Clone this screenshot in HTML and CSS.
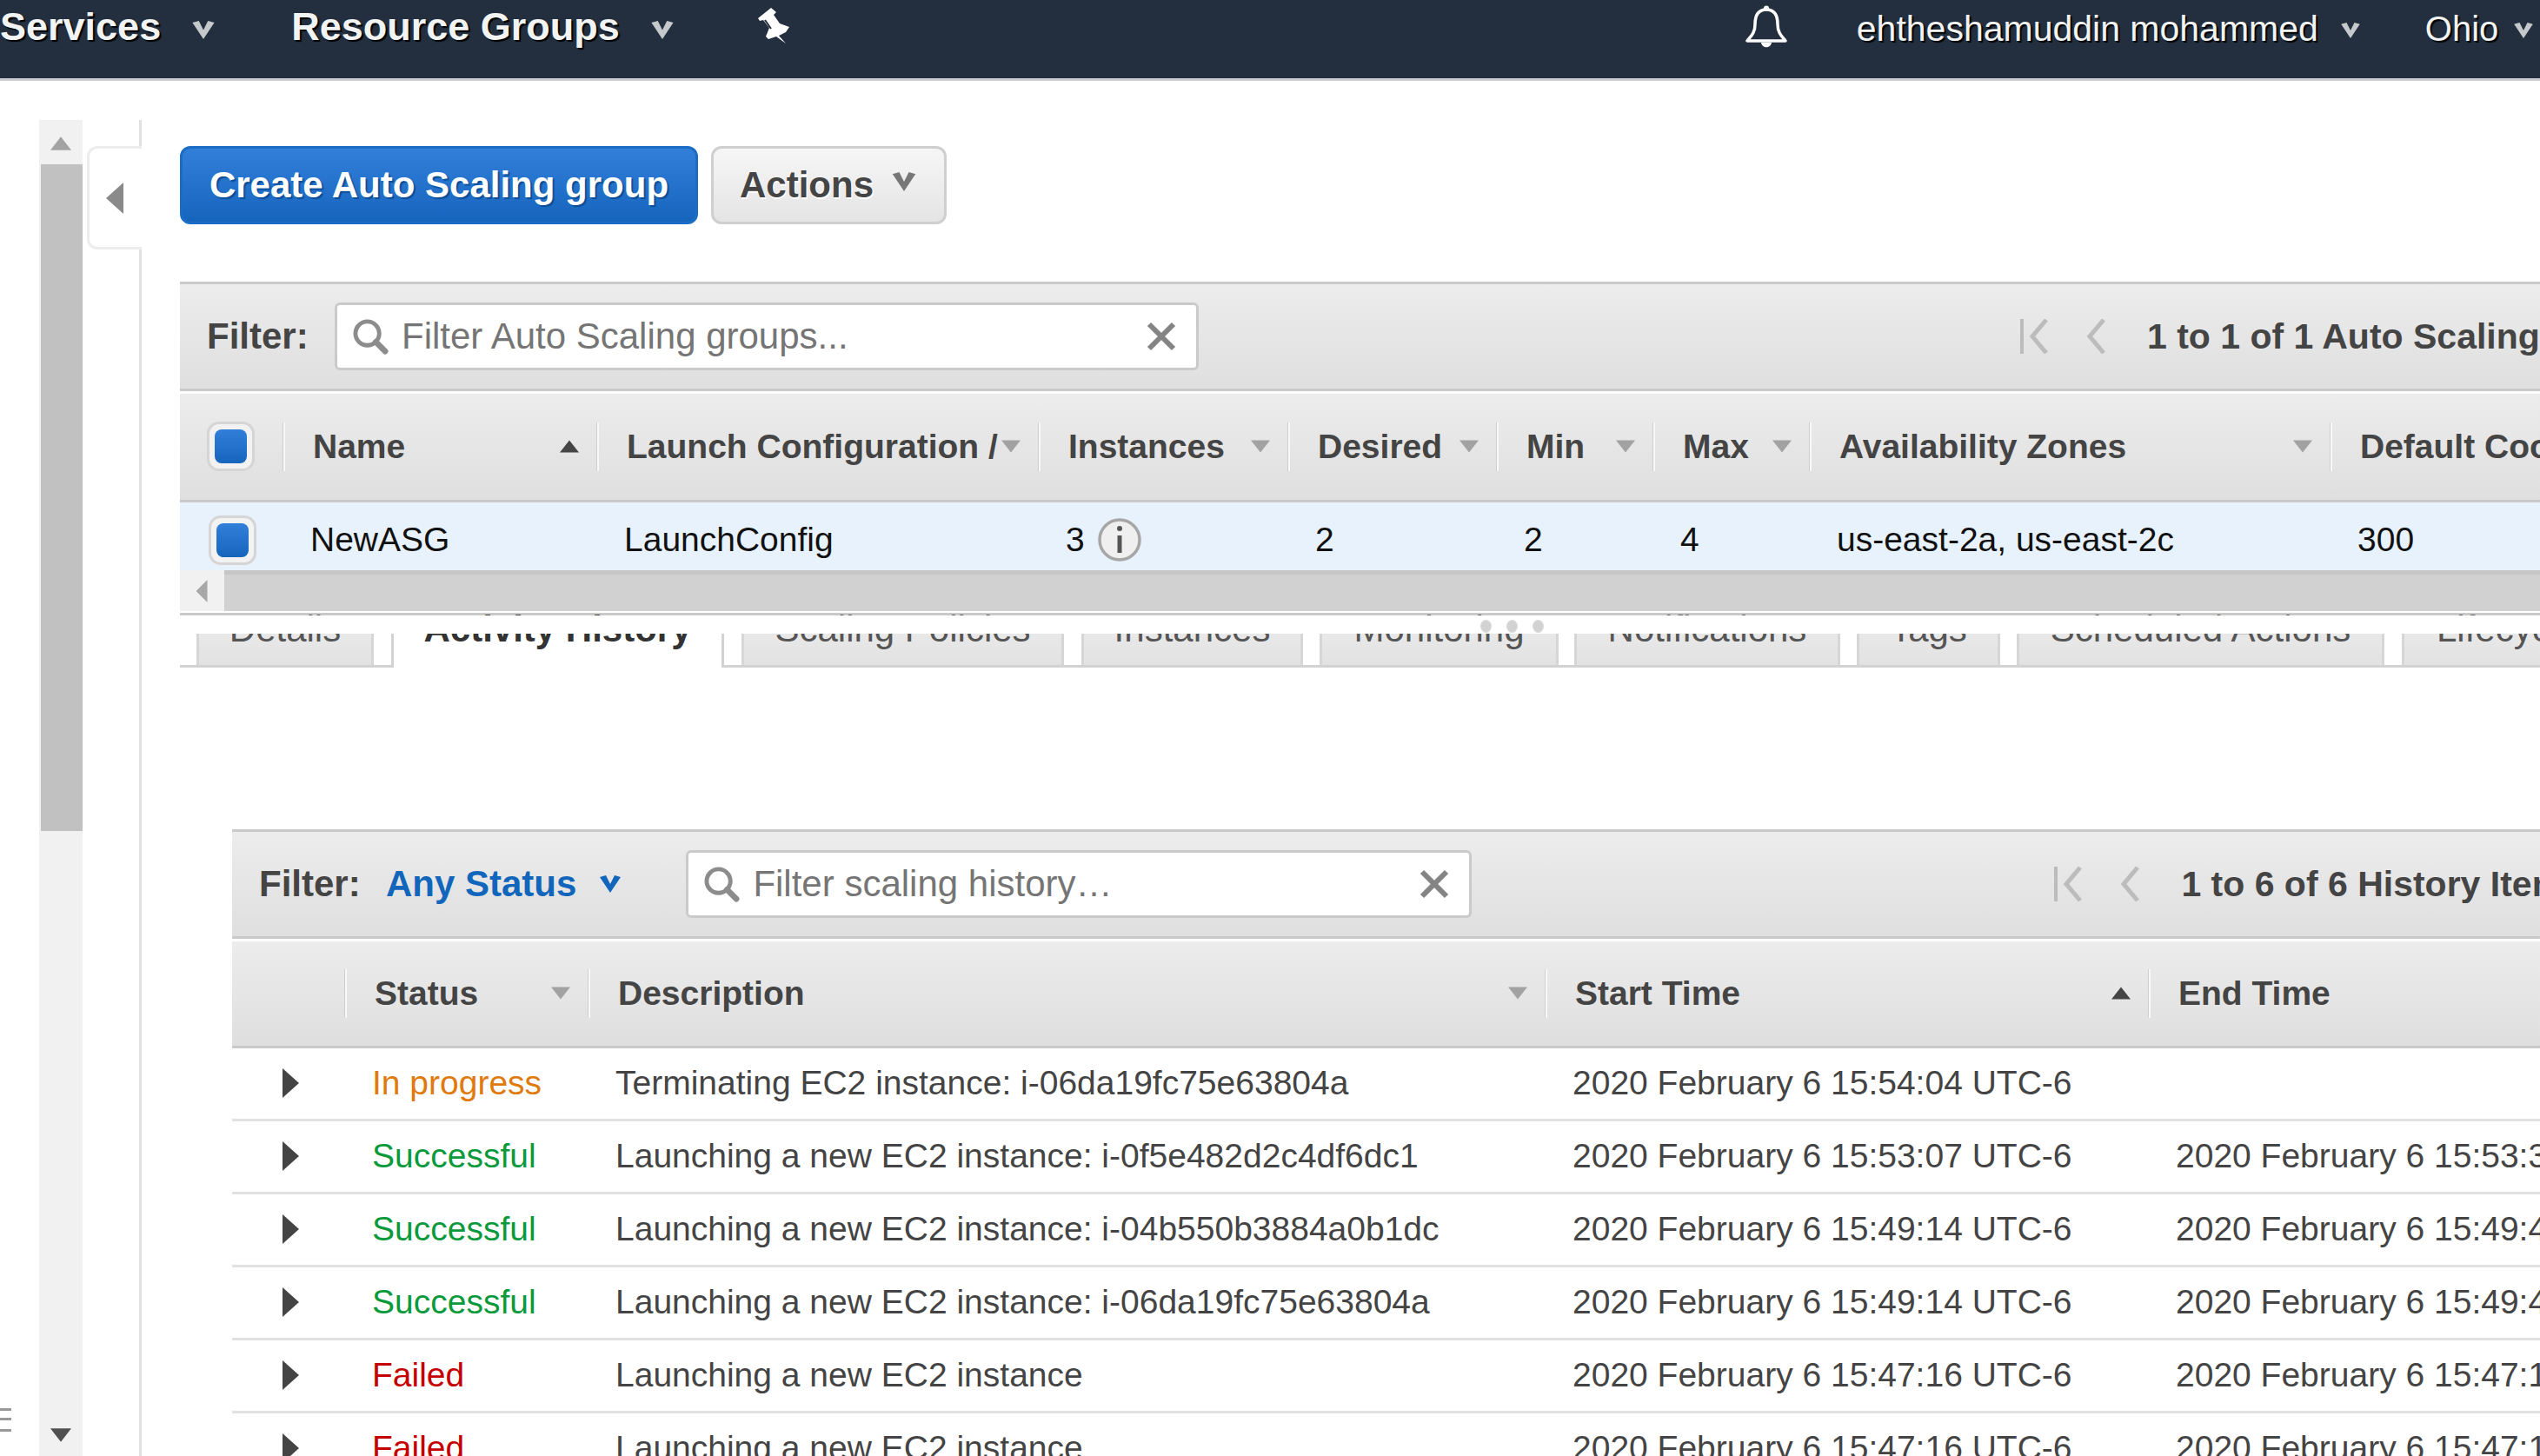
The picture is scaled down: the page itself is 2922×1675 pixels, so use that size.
FILE: index.html
```html
<!DOCTYPE html>
<html lang="en">
<head>
  <meta charset="UTF-8">
  <title>Auto Scaling Groups</title>
  <link rel="stylesheet" href="styles.css">
</head>
<body>
  <svg class="defs" width="0" height="0">
    <symbol id="chev" viewBox="0 0 24 20"><path d="M0 2 7 0 12 10 17 0 24 2 12 20Z"/></symbol>
    <symbol id="down" viewBox="0 0 22 14"><path d="M0 0H22L11 14Z"/></symbol>
    <symbol id="up" viewBox="0 0 22 14"><path d="M0 14H22L11 0Z"/></symbol>
    <symbol id="search" viewBox="0 0 42 42"><circle cx="17" cy="17" r="14" fill="none" stroke="#8c8c8c" stroke-width="5"/><path d="M27 27 38 38" stroke="#8c8c8c" stroke-width="7" stroke-linecap="round"/></symbol>
    <symbol id="close" viewBox="0 0 34 34"><path d="M3 3 31 31M31 3 3 31" stroke="#848484" stroke-width="6"/></symbol>
    <symbol id="first" viewBox="0 0 32 40"><path d="M2 0V40" stroke="#bcbcbc" stroke-width="4"/><path d="M30 1 14 20 30 39" fill="none" stroke="#bcbcbc" stroke-width="5"/></symbol>
    <symbol id="prev" viewBox="0 0 22 40"><path d="M20 1 4 20 20 39" fill="none" stroke="#bcbcbc" stroke-width="5"/></symbol>
    <symbol id="row-arrow" viewBox="0 0 19 34"><path d="M0 0 19 17 0 34Z"/></symbol>
  </svg>

  <header class="topnav">
    <span class="nav-item nav-bold nav-services">Services</span>
    <svg class="nav-chev"><use href="#chev"/></svg>
    <span class="nav-item nav-bold nav-groups">Resource Groups</span>
    <svg class="nav-chev"><use href="#chev"/></svg>
    <svg class="nav-pin" viewBox="0 0 40 44"><path d="M1 13 16 1 22 6 19 9 26 19 37 23 33 29 25 33 33 42 22 34 13 37 10 34 14 24 7 15 3 16Z" fill="#fff"/><path d="M9 15 16 25" stroke="#232f3e" stroke-width="2"/></svg>
    <svg class="nav-bell" viewBox="0 0 50 50"><path d="M25 5C15 5 12 12 12 22 12 32 7 36 3 41H47C43 36 38 32 38 22 38 12 35 5 25 5Z" fill="none" stroke="#fff" stroke-width="3.5" stroke-linejoin="round"/><circle cx="25" cy="3.5" r="3" fill="#fff"/><path d="M19 43C20 50 30 50 31 43Z" fill="#fff"/></svg>
    <span class="nav-item nav-user">ehtheshamuddin mohammed</span>
    <svg class="nav-caret"><use href="#chev"/></svg>
    <span class="nav-item nav-region">Ohio</span>
    <svg class="nav-caret"><use href="#chev"/></svg>
  </header>

  <div class="workspace">
    <span class="handle-lines"></span>
    <div class="page-scroll">
      <svg class="page-arrow"><use href="#up"/></svg>
      <div class="page-thumb"></div>
      <svg class="page-arrow page-arrow-down"><use href="#down"/></svg>
    </div>
    <div class="side-rule">
      <div class="collapse-tab"><svg viewBox="0 0 20 36"><path d="M20 0V36L0 18Z"/></svg></div>
    </div>

    <main class="content">
      <div class="actions">
        <button class="btn btn-primary">Create Auto Scaling group</button>
        <button class="btn btn-default">Actions <svg class="btn-chev"><use href="#chev"/></svg></button>
      </div>

      <section class="groups">
        <div class="filter-bar">
          <span class="filter-label">Filter:</span>
          <div class="search search-groups">
            <svg class="search-icon"><use href="#search"/></svg>
            <span class="placeholder">Filter Auto Scaling groups...</span>
            <svg class="search-clear"><use href="#close"/></svg>
          </div>
          <div class="pager pager-groups">
            <svg class="pager-first"><use href="#first"/></svg>
            <svg class="pager-prev"><use href="#prev"/></svg>
            <span class="pager-text">1 to 1 of 1 Auto Scaling Groups</span>
          </div>
        </div>

        <table class="grid">
          <colgroup>
            <col class="g1"><col class="g2"><col class="g3"><col class="g4"><col class="g5"><col class="g6"><col class="g7"><col class="g8"><col class="g9">
          </colgroup>
          <thead>
            <tr>
              <th class="no-rule"><span class="check check-head"></span></th>
              <th><div class="th-in">Name<svg class="sort sort-dark"><use href="#up"/></svg></div></th>
              <th><div class="th-in">Launch Configuration /<svg class="sort"><use href="#down"/></svg></div></th>
              <th><div class="th-in">Instances<svg class="sort"><use href="#down"/></svg></div></th>
              <th><div class="th-in">Desired<svg class="sort"><use href="#down"/></svg></div></th>
              <th><div class="th-in">Min<svg class="sort"><use href="#down"/></svg></div></th>
              <th><div class="th-in">Max<svg class="sort"><use href="#down"/></svg></div></th>
              <th><div class="th-in">Availability Zones<svg class="sort"><use href="#down"/></svg></div></th>
              <th><div class="th-in">Default Cooldown</div></th>
            </tr>
          </thead>
          <tbody>
            <tr class="selected">
              <td class="cell-check"><span class="check"></span></td>
              <td>NewASG</td>
              <td>LaunchConfig</td>
              <td><div class="count">3<svg class="info" viewBox="0 0 50 50"><circle cx="25" cy="25" r="23" fill="#efefef" stroke="#a6a6a6" stroke-width="3.5"/><path d="M25 20V40" stroke="#555" stroke-width="5"/><circle cx="25" cy="12" r="3" fill="#555"/></svg></div></td>
              <td>2</td>
              <td>2</td>
              <td>4</td>
              <td>us-east-2a, us-east-2c</td>
              <td>300</td>
            </tr>
          </tbody>
        </table>

        <div class="hscroll">
          <div class="hscroll-btn"><svg viewBox="0 0 14 28"><path d="M14 0V28L0 14Z"/></svg></div>
          <div class="hscroll-thumb"></div>
        </div>
      </section>

      <div class="tabs-wrap">
        <nav class="tabs">
          <span class="tab t-details">Details</span>
          <span class="tab tab-active t-activity">Activity History</span>
          <span class="tab t-scaling">Scaling Policies</span>
          <span class="tab t-instances">Instances</span>
          <span class="tab t-monitoring">Monitoring</span>
          <span class="tab t-notifications">Notifications</span>
          <span class="tab t-tags">Tags</span>
          <span class="tab t-scheduled">Scheduled Actions</span>
          <span class="tab t-lifecycle">Lifecycle Hooks</span>
        </nav>
        <div class="tabs-cover"></div>
        <div class="drag-dots"><i></i><i></i><i></i></div>
      </div>

      <section class="history">
        <div class="filter-bar">
          <span class="filter-label">Filter:</span>
          <span class="status-filter">Any Status</span>
          <svg class="status-chev"><use href="#chev"/></svg>
          <div class="search search-history">
            <svg class="search-icon"><use href="#search"/></svg>
            <span class="placeholder">Filter scaling history…</span>
            <svg class="search-clear"><use href="#close"/></svg>
          </div>
          <div class="pager pager-history">
            <svg class="pager-first"><use href="#first"/></svg>
            <svg class="pager-prev"><use href="#prev"/></svg>
            <span class="pager-text">1 to 6 of 6 History Items</span>
          </div>
        </div>

        <table class="grid grid-history">
          <colgroup>
            <col class="h1"><col class="h2"><col class="h3"><col class="h4"><col class="h5">
          </colgroup>
          <thead>
            <tr>
              <th class="no-rule"></th>
              <th><div class="th-in">Status<svg class="sort"><use href="#down"/></svg></div></th>
              <th><div class="th-in">Description<svg class="sort"><use href="#down"/></svg></div></th>
              <th><div class="th-in">Start Time<svg class="sort sort-dark"><use href="#up"/></svg></div></th>
              <th><div class="th-in">End Time</div></th>
            </tr>
          </thead>
          <tbody>
            <tr>
              <td class="cell-arrow"><svg class="row-arrow"><use href="#row-arrow"/></svg></td>
              <td class="st-progress">In progress</td>
              <td>Terminating EC2 instance: i-06da19fc75e63804a</td>
              <td>2020 February 6 15:54:04 UTC-6</td>
              <td></td>
            </tr>
            <tr>
              <td class="cell-arrow"><svg class="row-arrow"><use href="#row-arrow"/></svg></td>
              <td class="st-ok">Successful</td>
              <td>Launching a new EC2 instance: i-0f5e482d2c4df6dc1</td>
              <td>2020 February 6 15:53:07 UTC-6</td>
              <td>2020 February 6 15:53:39 UTC-6</td>
            </tr>
            <tr>
              <td class="cell-arrow"><svg class="row-arrow"><use href="#row-arrow"/></svg></td>
              <td class="st-ok">Successful</td>
              <td>Launching a new EC2 instance: i-04b550b3884a0b1dc</td>
              <td>2020 February 6 15:49:14 UTC-6</td>
              <td>2020 February 6 15:49:46 UTC-6</td>
            </tr>
            <tr>
              <td class="cell-arrow"><svg class="row-arrow"><use href="#row-arrow"/></svg></td>
              <td class="st-ok">Successful</td>
              <td>Launching a new EC2 instance: i-06da19fc75e63804a</td>
              <td>2020 February 6 15:49:14 UTC-6</td>
              <td>2020 February 6 15:49:46 UTC-6</td>
            </tr>
            <tr>
              <td class="cell-arrow"><svg class="row-arrow"><use href="#row-arrow"/></svg></td>
              <td class="st-fail">Failed</td>
              <td>Launching a new EC2 instance</td>
              <td>2020 February 6 15:47:16 UTC-6</td>
              <td>2020 February 6 15:47:16 UTC-6</td>
            </tr>
            <tr>
              <td class="cell-arrow"><svg class="row-arrow"><use href="#row-arrow"/></svg></td>
              <td class="st-fail">Failed</td>
              <td>Launching a new EC2 instance</td>
              <td>2020 February 6 15:47:16 UTC-6</td>
              <td>2020 February 6 15:47:16 UTC-6</td>
            </tr>
          </tbody>
        </table>
      </section>
    </main>
  </div>
</body>
</html>
```

FILE: styles.css
```css
html, body {
  margin: 0;
  padding: 0;
  height: 100%;
  overflow: hidden;
}
body {
  width: 2922px;
  height: 1675px;
  background: #fff;
  color: #444;
  font-family: "Liberation Sans", Arial, sans-serif;
  font-size: 39px;
}
.defs {
  position: absolute;
}

/* top bar */
.topnav {
  display: flex;
  height: 90px;
  border-bottom: 3px solid #c9cdd2;
  background: #232f3e;
  color: #f2f3f3;
  align-items: flex-start;
  white-space: nowrap;
}
.nav-item {
  line-height: 60px;
  text-shadow: 2px 2px 1px #000;
}
.nav-bold {
  font-size: 45px;
  font-weight: bold;
  line-height: 62px;
}
.nav-chev {
  width: 28px;
  height: 21px;
  margin-top: 24px;
  margin-left: 35px;
  fill: #c6c9cc;
}
.nav-groups {
  margin-left: 87px;
}
.nav-pin {
  width: 40px;
  height: 44px;
  margin-left: 95px;
  margin-top: 8px;
}
.nav-bell {
  width: 50px;
  height: 52px;
  margin-left: 1096px;
  margin-top: 5px;
}
.nav-user {
  margin-left: 79px;
  font-size: 41px;
  line-height: 66px;
}
.nav-caret {
  width: 22px;
  height: 18px;
  margin-top: 26px;
  margin-left: 26px;
  fill: #c6c9cc;
}
.nav-region {
  margin-left: 75px;
  font-size: 40px;
  line-height: 66px;
}
.nav-region + .nav-caret {
  margin-left: 18px;
}

/* left gutter */
.workspace {
  display: flex;
  height: 1582px;
  position: relative;
}
.handle-lines {
  position: absolute;
  left: 0;
  top: 1527px;
  width: 13px;
  height: 27px;
  box-sizing: border-box;
  border-top: 3px solid #999;
  border-bottom: 3px solid #999;
}
.handle-lines::after {
  content: "";
  display: block;
  margin-top: 8px;
  height: 3px;
  background: #999;
}
.page-scroll {
  display: flex;
  flex-direction: column;
  width: 50px;
  margin: 45px 0 0 45px;
  background: #f1f1f1;
  align-items: flex-end;
}
.page-arrow {
  width: 24px;
  height: 16px;
  margin: 19px 13px 16px;
  fill: #a3a3a3;
  flex: none;
}
.page-arrow-down {
  margin: 0 13px 0;
  position: absolute;
  top: 1550px;
  fill: #505050;
}
.page-thumb {
  width: 48px;
  height: 767px;
  background: #c1c1c1;
}
.side-rule {
  position: relative;
  width: 65px;
  margin-top: 45px;
  border-right: 3px solid #e1e1e1;
}
.collapse-tab {
  position: absolute;
  left: 5px;
  top: 30px;
  width: 63px;
  height: 119px;
  box-sizing: border-box;
  border: 3px solid #ededed;
  border-right: none;
  border-radius: 12px 0 0 12px;
  background: #fff;
  display: flex;
  align-items: center;
  padding-left: 19px;
}
.collapse-tab svg {
  width: 20px;
  height: 36px;
  fill: #8a8a8a;
}

/* content */
.content {
  margin-left: 44px;
  width: 2715px;
  white-space: nowrap;
}
.actions {
  display: flex;
  gap: 15px;
  padding-top: 75px;
  margin-bottom: 66px;
}
.btn {
  height: 90px;
  box-sizing: border-box;
  border-radius: 12px;
  font-family: inherit;
  font-size: 42px;
  font-weight: bold;
  padding: 0;
}
.btn-primary {
  width: 596px;
  border: 3px solid #1a6cc4;
  background: linear-gradient(#327fd9, #1665bd);
  color: #fff;
  text-shadow: 2px 2px 1px #0b4d96;
}
.btn-default {
  width: 271px;
  border: 3px solid #cfcfcf;
  background: linear-gradient(#f6f6f6, #e4e4e4);
  color: #444;
  text-align: left;
  padding-left: 30px;
  text-shadow: 1px 2px 0 #fff;
}
.btn-chev {
  width: 30px;
  height: 22px;
  margin-left: 8px;
  vertical-align: 7px;
  fill: #777;
}

.filter-bar {
  display: flex;
  align-items: center;
  height: 126px;
  box-sizing: border-box;
  border-top: 3px solid #c9c9c9;
  border-bottom: 3px solid #c9c9c9;
  background: linear-gradient(#ececec, #dfdfdf);
  padding-left: 31px;
  font-size: 42px;
}
.filter-label {
  font-weight: bold;
  width: 147px;
  flex: none;
}
.search {
  display: flex;
  align-items: center;
  box-sizing: border-box;
  height: 78px;
  border: 3px solid #cacaca;
  border-radius: 6px;
  background: #fff;
  color: #757575;
  flex: none;
}
.search-groups {
  width: 994px;
}
.search-history {
  width: 904px;
  margin-left: 73px;
}
.search-icon {
  width: 41px;
  height: 41px;
  margin-left: 18px;
  flex: none;
}
.placeholder {
  margin-left: 15px;
  flex: 1;
}
.search-clear {
  width: 34px;
  height: 34px;
  margin-right: 23px;
  flex: none;
}
.pager {
  display: flex;
  align-items: center;
}
.pager-groups {
  margin-left: 945px;
}
.pager-history {
  margin-left: 670px;
}
.pager-first {
  width: 32px;
  height: 40px;
}
.pager-prev {
  width: 22px;
  height: 40px;
  margin-left: 44px;
}
.pager-text {
  margin-left: 48px;
  font-size: 41px;
  font-weight: bold;
}

/* tables */
.grid {
  margin-top: 3px;
  border-collapse: collapse;
  table-layout: fixed;
  width: 2900px;
}
.grid th {
  height: 123px;
  box-sizing: border-box;
  padding: 0;
  border-bottom: 3px solid #c9c9c9;
  background: linear-gradient(#ececec, #dfdfdf);
  font-weight: bold;
  text-align: left;
}
.th-in {
  display: flex;
  align-items: center;
  height: 56px;
  box-sizing: border-box;
  border-left: 2px solid #f8f8f8;
  box-shadow: -1px 0 0 #cfcfcf;
  padding-left: 32px;
}
.sort {
  width: 22px;
  height: 15px;
  margin-left: auto;
  margin-right: 21px;
  fill: #a2a2a2;
  flex: none;
}
.sort-dark {
  fill: #444;
}
.grid td {
  height: 77px;
  box-sizing: border-box;
  padding: 0 0 0 31px;
  color: #111;
}
.selected td {
  height: 80px;
  padding-top: 9px;
  background: #e8f2fd;
}
.g1 { width: 119px; }
.g2 { width: 361px; }
.g3 { width: 508px; }
.g4 { width: 287px; }
.g5 { width: 240px; }
.g6 { width: 180px; }
.g7 { width: 180px; }
.g8 { width: 599px; }
.g9 { width: 426px; }
.check {
  display: block;
  box-sizing: border-box;
  width: 55px;
  height: 57px;
  border: 3px solid #d5d5d5;
  border-radius: 14px;
  background: #f2f2f2;
  position: relative;
}
.check::after {
  content: "";
  position: absolute;
  left: 6px;
  top: 6px;
  width: 37px;
  height: 39px;
  border-radius: 8px;
  background: linear-gradient(#327fd9, #1665bd);
}
.check-head {
  margin-left: 31px;
}
.grid td.cell-check {
  padding-left: 33px;
}
.count {
  display: flex;
  align-items: center;
}
.info {
  width: 50px;
  height: 50px;
  margin-left: 15px;
}

.hscroll {
  display: flex;
  height: 47px;
  margin-bottom: 2px;
}
.hscroll-btn {
  width: 51px;
  background: #f1f1f1;
  display: flex;
  align-items: center;
  padding-left: 18px;
  box-sizing: border-box;
}
.hscroll-btn svg {
  width: 14px;
  height: 26px;
  fill: #a8a8a8;
}
.hscroll-thumb {
  flex: 1;
  background: #d1d1d1;
  border-top: 5px solid #c6c6c6;
}

/* tabs, the white cover hides their top half */
.tabs-wrap {
  position: relative;
  border-top: 3px solid #c9c9c9;
  margin-bottom: 186px;
}
.tabs {
  display: flex;
  height: 57px;
  box-sizing: content-box;
  border-bottom: 3px solid #d2d2d2;
  color: #555;
  font-size: 42px;
  line-height: 31px;
}
.tab {
  flex: none;
  box-sizing: border-box;
  height: 57px;
  margin-left: 20px;
  text-align: center;
  background: linear-gradient(#ececec, #e2e2e2);
  border-left: 3px solid #d6d6d6;
  border-right: 3px solid #d6d6d6;
}
.tab-active {
  height: 60px;
  background: #fff;
  color: #333;
  font-weight: bold;
  border-left: 3px solid #d2d2d2;
  border-right: 3px solid #d2d2d2;
}
.t-details { margin-left: 19px; width: 204px; }
.t-activity { width: 383px; }
.t-scaling { width: 371px; }
.t-instances { width: 255px; }
.t-monitoring { margin-left: 19px; width: 275px; }
.t-notifications { margin-left: 18px; width: 306px; }
.t-tags { margin-left: 19px; width: 165px; }
.t-scheduled { margin-left: 19px; width: 423px; }
.t-lifecycle { width: 374px; }
.tabs-cover {
  position: absolute;
  left: 0;
  right: 0;
  top: 0;
  height: 21px;
  background: #fff;
}
.drag-dots {
  position: absolute;
  left: 1496px;
  top: 5px;
  display: flex;
  gap: 17px;
}
.drag-dots i {
  width: 13px;
  height: 15px;
  border-radius: 50%;
  border: 1px solid #dcdcdc;
  box-sizing: border-box;
  background: #d2d2d2;
}

/* scaling history */
.history {
  margin-left: 60px;
}
.status-filter {
  color: #1166bb;
  font-weight: bold;
  flex: none;
}
.history .filter-label {
  width: 146px;
}
.status-chev {
  width: 28px;
  height: 20px;
  margin-left: 25px;
  fill: #1166bb;
  flex: none;
}
.grid-history {
  width: 2800px;
}
.grid-history th {
  height: 121px;
}
.h1 { width: 130px; }
.h2 { width: 280px; }
.h3 { width: 1101px; }
.h4 { width: 694px; }
.h5 { width: 595px; }
.grid-history td {
  height: 84px;
  border-bottom: 3px solid #e1e1e1;
  color: #444;
}
.grid-history td.cell-arrow {
  padding-left: 58px;
}
.row-arrow {
  display: block;
  width: 19px;
  height: 34px;
  fill: #444;
}
.grid-history td.st-progress { color: #df7a0c; }
.grid-history td.st-ok { color: #0a9a3c; }
.grid-history td.st-fail { color: #c40000; }
```
